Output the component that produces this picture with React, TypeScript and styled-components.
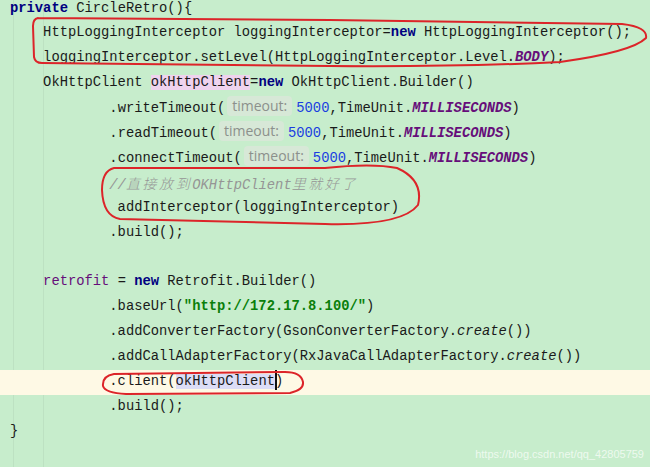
import React from 'react';
import styled, { createGlobalStyle } from 'styled-components';

const colors = {
  bg: '#C7EDCC',
  current: '#FEF9E5',
  text: '#1a1a1a',
  keyword: '#000080',
  field: '#660E7A',
  number: '#1A3DE0',
  string: '#0A7F0A',
  comment: '#959595',
  hint: '#8C908C',
  hintBg: '#D7E8D7',
  writeUsage: '#EFD3EE',
  readUsage: '#DCDDF6',
  ink: '#DC2429',
};

const GlobalStyle = createGlobalStyle`
  html, body {
    margin: 0;
    padding: 0;
    background: ${colors.bg};
  }
`;

const Editor = styled.div`
  position: relative;
  width: 650px;
  height: 467px;
  overflow: hidden;
  background-color: ${colors.bg};
  background-image: linear-gradient(
      to right,
      transparent 13px,
      rgba(0, 0, 0, 0.05) 13px,
      rgba(0, 0, 0, 0.05) 14px,
      transparent 14px
    ),
    linear-gradient(
      to right,
      transparent 43px,
      rgba(0, 0, 0, 0.05) 43px,
      rgba(0, 0, 0, 0.05) 44px,
      transparent 44px
    );
`;

const Code = styled.div`
  display: flex;
  flex-direction: column;
  margin-top: -3.5px;
  font-family: 'Liberation Mono', 'Noto Sans CJK SC', monospace;
  font-size: 13.8px;
  color: ${colors.text};
`;

const Line = styled.div<{ $indent?: number; $current?: boolean }>`
  height: 24.9px;
  line-height: 24.9px;
  white-space: pre;
  padding-left: calc(10px + ${(p) => (p.$indent ?? 0) * 4}ch);
  background: ${(p) => (p.$current ? colors.current : 'transparent')};
`;

const Kw = styled.span`
  color: ${colors.keyword};
  font-weight: 700;
`;

const Field = styled.span`
  color: ${colors.field};
`;

const Const = styled.span`
  color: ${colors.field};
  font-weight: 700;
  font-style: italic;
`;

const Num = styled.span`
  color: ${colors.number};
`;

const Str = styled.span`
  color: ${colors.string};
  font-weight: 700;
`;

const Ital = styled.span`
  font-style: italic;
`;

const Comment = styled.span`
  color: ${colors.comment};
  font-style: italic;
`;

const Cjk = styled.span`
  font-family: 'Noto Sans CJK SC', sans-serif;
  font-size: 14px;
  letter-spacing: 2.6px;
  font-weight: 300;
`;

const Usage = styled.span<{ $write?: boolean }>`
  background: ${(p) => (p.$write ? colors.writeUsage : colors.readUsage)};
`;

const Hint = styled.span`
  display: inline-block;
  margin: 0 4px 0 2px;
  padding: 0 5px;
  height: 20px;
  line-height: 20px;
  border-radius: 4px;
  background: ${colors.hintBg};
  color: ${colors.hint};
  font-family: 'Open Sans', 'Noto Sans', sans-serif;
  font-size: 14px;
  vertical-align: 1px;
`;

const Caret = styled.span`
  display: inline-block;
  width: 2px;
  height: 20px;
  margin-right: -2px;
  background: #111;
  vertical-align: -5px;
`;

const Marks = styled.svg`
  position: absolute;
  inset: 0;
  pointer-events: none;
`;

const Watermark = styled.div`
  position: absolute;
  right: 6px;
  bottom: 7px;
  font-family: 'Liberation Sans', Arial, sans-serif;
  font-size: 11px;
  color: rgba(255, 255, 255, 0.7);
`;

const Timeout = ({ call }: { call: string }) => (
  <Line $indent={3}>
    .{call}(<Hint>timeout:</Hint>
    <Num>5000</Num>,TimeUnit.<Const>MILLISECONDS</Const>)
  </Line>
);

const App = () => (
  <>
    <GlobalStyle />
    <Editor>
      <Code>
        <Line>
          <Kw>private</Kw> CircleRetro(){'{'}
        </Line>
        <Line $indent={1}>
          HttpLoggingInterceptor loggingInterceptor=<Kw>new</Kw> HttpLoggingInterceptor();
        </Line>
        <Line $indent={1}>
          loggingInterceptor.setLevel(HttpLoggingInterceptor.Level.<Const>BODY</Const>);
        </Line>
        <Line $indent={1}>
          OkHttpClient <Usage $write>okHttpClient</Usage>=<Kw>new</Kw> OkHttpClient.Builder()
        </Line>
        <Timeout call="writeTimeout" />
        <Timeout call="readTimeout" />
        <Timeout call="connectTimeout" />
        <Line $indent={3}>
          <Comment>
            //<Cjk>直接放到</Cjk>OKHttpClient<Cjk>里就好了</Cjk>
          </Comment>
        </Line>
        <Line $indent={3}> addInterceptor(loggingInterceptor)</Line>
        <Line $indent={3}>.build();</Line>
        <Line />
        <Line $indent={1}>
          <Field>retrofit</Field> = <Kw>new</Kw> Retrofit.Builder()
        </Line>
        <Line $indent={3}>
          .baseUrl(<Str>"http://172.17.8.100/"</Str>)
        </Line>
        <Line $indent={3}>
          .addConverterFactory(GsonConverterFactory.<Ital>create</Ital>())
        </Line>
        <Line $indent={3}>
          .addCallAdapterFactory(RxJavaCallAdapterFactory.<Ital>create</Ital>())
        </Line>
        <Line $indent={3} $current>
          .client(<Usage>okHttpClient</Usage>
          <Caret />)
        </Line>
        <Line $indent={3}>.build();</Line>
        <Line>{'}'}</Line>
      </Code>

      <Marks width="650" height="467" viewBox="0 0 650 467">
        <g fill="none" stroke={colors.ink} strokeWidth="2" strokeLinecap="round" strokeLinejoin="round">
          <path d="M 38 18 Q 33 19 33 26 L 34 57 Q 35 63 42 63 L 330 66 Q 460 67 560 62 Q 632 52 646 38 Q 648 27 622 24 L 330 20 L 38 18" />
          <path d="M 114 168 Q 102 171 102 190 Q 103 216 120 219 L 325 224 Q 402 226 418 205 Q 424 180 397 168 Q 372 163 325 168 L 114 168" />
          <path d="M 114 374 Q 102 376 103 386 Q 105 393 126 394 L 290 393 Q 304 390 303 382 Q 301 372 285 372 L 114 374" />
        </g>
      </Marks>

      <Watermark>https://blog.csdn.net/qq_42805759</Watermark>
    </Editor>
  </>
);

export default App;
